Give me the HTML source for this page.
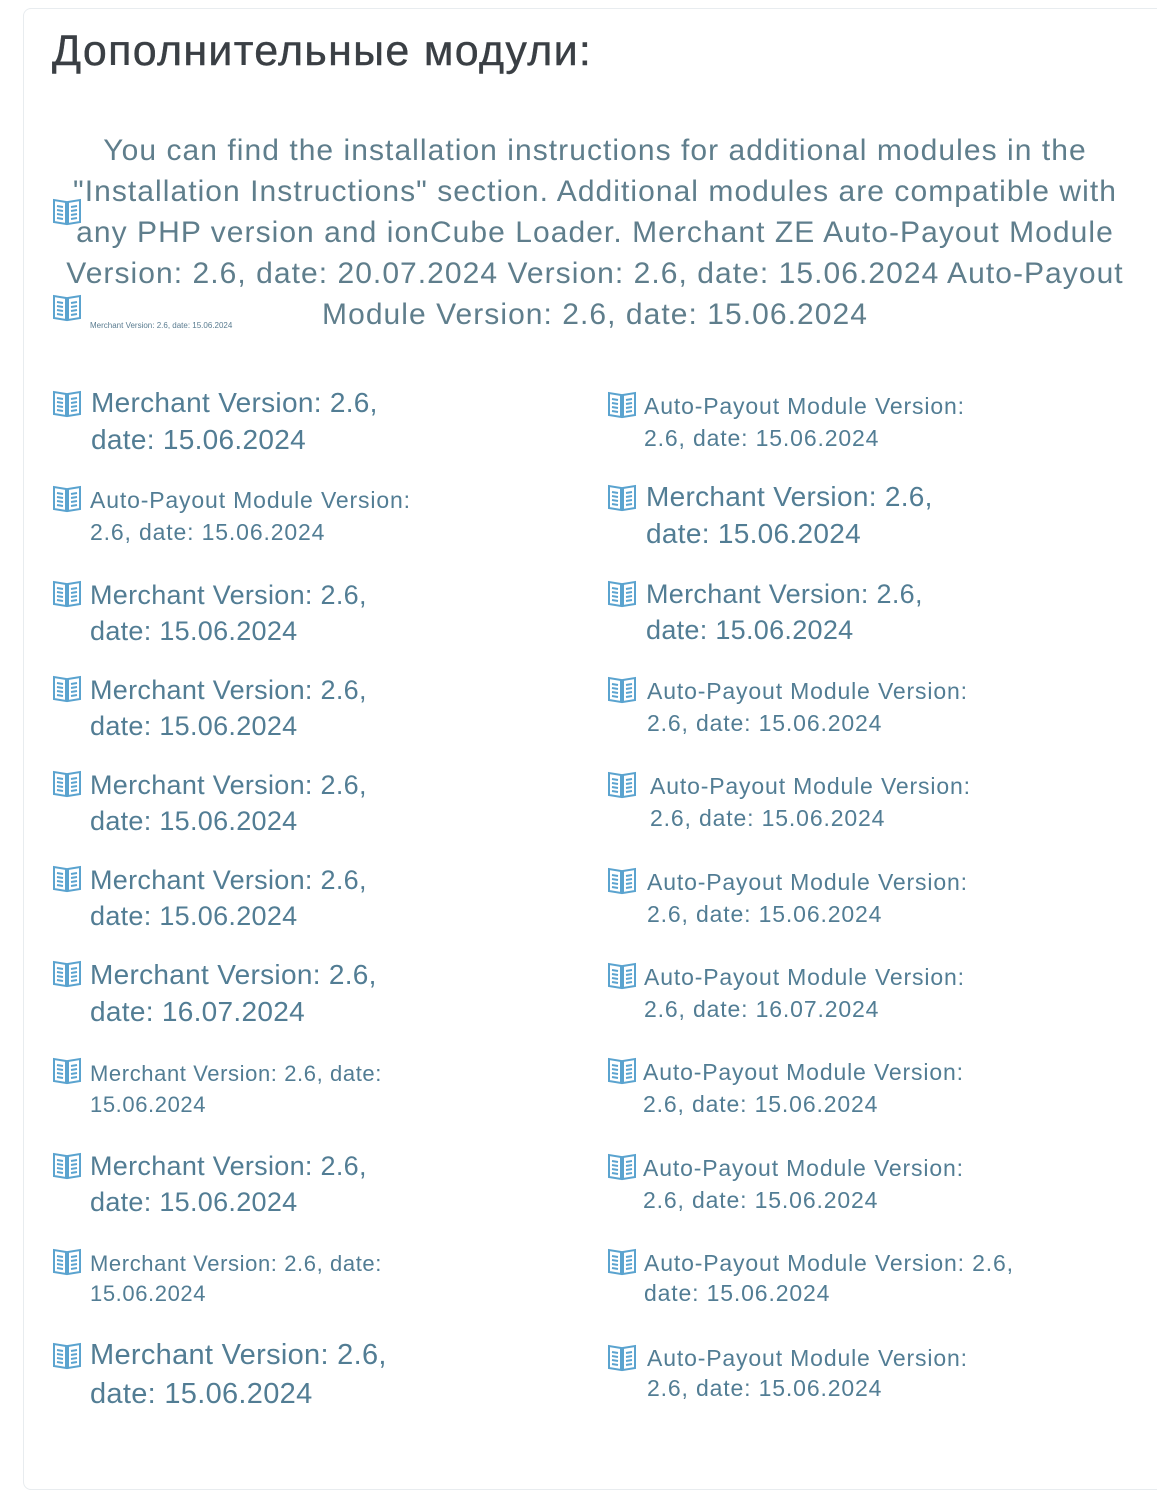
<!DOCTYPE html>
<html><head><meta charset="utf-8"><style>
body{margin:0;width:1157px;height:1425px;background:#fff;position:relative;overflow:hidden;font-family:"Liberation Sans","Noto Sans CJK SC",sans-serif}
.card{position:absolute;left:23px;top:8px;width:1150px;height:1480px;border:1px solid #e8ecef;border-radius:8px}
h1{position:absolute;left:52px;top:25px;margin:0;font-size:43px;font-weight:normal;color:#3a3f44;letter-spacing:1.3px;line-height:52px;-webkit-text-stroke:0.4px #3a3f44}
.p{position:absolute;left:40px;width:1110px;top:130px;text-align:center;font-size:30px;line-height:41px;color:#5f7e8c;letter-spacing:1.05px}
.it{position:absolute;color:#527d94;white-space:nowrap;letter-spacing:0.3px}
.ic{position:absolute}
.s{font-size:23px;line-height:32px;letter-spacing:0.85px}
.m{font-size:27px;line-height:36px}
.l{font-size:28px;line-height:37px}
.tiny{position:absolute;left:90px;top:321px;font-size:8px;color:#5a7c90}
</style></head><body>
<div class="card"></div>
<h1>Дополнительные модули:</h1>
<svg width="0" height="0" style="position:absolute"><defs><g id="b" fill="none" stroke="#5aa3cf" stroke-width="2"><path d="M2 4 L2 26 L14 28 L14 6 Z M28 4 L28 26 L16 28 L16 6 Z"/><path d="M5 10 L11 11 M5 14 L11 15 M5 18 L11 19 M5 22 L11 23 M19 11 L25 10 M19 15 L25 14 M19 19 L25 18 M19 23 L25 22"/></g></defs></svg>
<svg class="ic" style="left:52px;top:196px" width="30" height="30"><use href="#b"/></svg>
<svg class="ic" style="left:52px;top:292px" width="30" height="30"><use href="#b"/></svg>
<div class="tiny">Merchant Version: 2.6, date: 15.06.2024</div>
<div class="p">You can find the installation instructions for additional modules in the<br>"Installation Instructions" section. Additional modules are compatible with<br>any PHP version and ionCube Loader. Merchant ZE Auto-Payout Module<br>Version: 2.6, date: 20.07.2024 Version: 2.6, date: 15.06.2024 Auto-Payout<br>Module Version: 2.6, date: 15.06.2024</div>

<svg class="ic" style="left:52px;top:388px" width="30" height="30"><use href="#b"/></svg>
<div class="it l" style="left:91px;top:384px">Merchant Version: 2.6,<br>date: 15.06.2024</div>
<svg class="ic" style="left:52px;top:483px" width="30" height="30"><use href="#b"/></svg>
<div class="it s" style="left:90px;top:484px">Auto-Payout Module Version:<br>2.6, date: 15.06.2024</div>
<svg class="ic" style="left:52px;top:578px" width="30" height="30"><use href="#b"/></svg>
<div class="it m" style="left:90px;top:577px">Merchant Version: 2.6,<br>date: 15.06.2024</div>
<svg class="ic" style="left:52px;top:673px" width="30" height="30"><use href="#b"/></svg>
<div class="it m" style="left:90px;top:672px">Merchant Version: 2.6,<br>date: 15.06.2024</div>
<svg class="ic" style="left:52px;top:768px" width="30" height="30"><use href="#b"/></svg>
<div class="it m" style="left:90px;top:767px">Merchant Version: 2.6,<br>date: 15.06.2024</div>
<svg class="ic" style="left:52px;top:863px" width="30" height="30"><use href="#b"/></svg>
<div class="it m" style="left:90px;top:862px">Merchant Version: 2.6,<br>date: 15.06.2024</div>
<svg class="ic" style="left:52px;top:958px" width="30" height="30"><use href="#b"/></svg>
<div class="it l" style="left:90px;top:956px">Merchant Version: 2.6,<br>date: 16.07.2024</div>
<svg class="ic" style="left:52px;top:1055px" width="30" height="30"><use href="#b"/></svg>
<div class="it" style="left:90px;top:1058px;font-size:22px;line-height:31px;letter-spacing:0.6px">Merchant Version: 2.6, date:<br>15.06.2024</div>
<svg class="ic" style="left:52px;top:1150px" width="30" height="30"><use href="#b"/></svg>
<div class="it m" style="left:90px;top:1148px">Merchant Version: 2.6,<br>date: 15.06.2024</div>
<svg class="ic" style="left:52px;top:1246px" width="30" height="30"><use href="#b"/></svg>
<div class="it" style="left:90px;top:1249px;font-size:22px;line-height:30px;letter-spacing:0.6px">Merchant Version: 2.6, date:<br>15.06.2024</div>
<svg class="ic" style="left:52px;top:1340px" width="30" height="30"><use href="#b"/></svg>
<div class="it" style="left:90px;top:1336px;font-size:29px;line-height:39px">Merchant Version: 2.6,<br>date: 15.06.2024</div>

<svg class="ic" style="left:607px;top:389px" width="30" height="30"><use href="#b"/></svg>
<div class="it s" style="left:644px;top:390px">Auto-Payout Module Version:<br>2.6, date: 15.06.2024</div>
<svg class="ic" style="left:607px;top:482px" width="30" height="30"><use href="#b"/></svg>
<div class="it l" style="left:646px;top:478px">Merchant Version: 2.6,<br>date: 15.06.2024</div>
<svg class="ic" style="left:607px;top:578px" width="30" height="30"><use href="#b"/></svg>
<div class="it m" style="left:646px;top:576px">Merchant Version: 2.6,<br>date: 15.06.2024</div>
<svg class="ic" style="left:607px;top:674px" width="30" height="30"><use href="#b"/></svg>
<div class="it s" style="left:647px;top:675px">Auto-Payout Module Version:<br>2.6, date: 15.06.2024</div>
<svg class="ic" style="left:607px;top:769px" width="30" height="30"><use href="#b"/></svg>
<div class="it s" style="left:650px;top:770px">Auto-Payout Module Version:<br>2.6, date: 15.06.2024</div>
<svg class="ic" style="left:607px;top:865px" width="30" height="30"><use href="#b"/></svg>
<div class="it s" style="left:647px;top:866px">Auto-Payout Module Version:<br>2.6, date: 15.06.2024</div>
<svg class="ic" style="left:607px;top:960px" width="30" height="30"><use href="#b"/></svg>
<div class="it s" style="left:644px;top:961px">Auto-Payout Module Version:<br>2.6, date: 16.07.2024</div>
<svg class="ic" style="left:607px;top:1055px" width="30" height="30"><use href="#b"/></svg>
<div class="it s" style="left:643px;top:1056px">Auto-Payout Module Version:<br>2.6, date: 15.06.2024</div>
<svg class="ic" style="left:607px;top:1151px" width="30" height="30"><use href="#b"/></svg>
<div class="it s" style="left:643px;top:1152px">Auto-Payout Module Version:<br>2.6, date: 15.06.2024</div>
<svg class="ic" style="left:607px;top:1246px" width="30" height="30"><use href="#b"/></svg>
<div class="it s" style="left:644px;top:1248px;line-height:30px">Auto-Payout Module Version: 2.6,<br>date: 15.06.2024</div>
<svg class="ic" style="left:607px;top:1342px" width="30" height="30"><use href="#b"/></svg>
<div class="it s" style="left:647px;top:1343px;line-height:30px">Auto-Payout Module Version:<br>2.6, date: 15.06.2024</div>
</body></html>
